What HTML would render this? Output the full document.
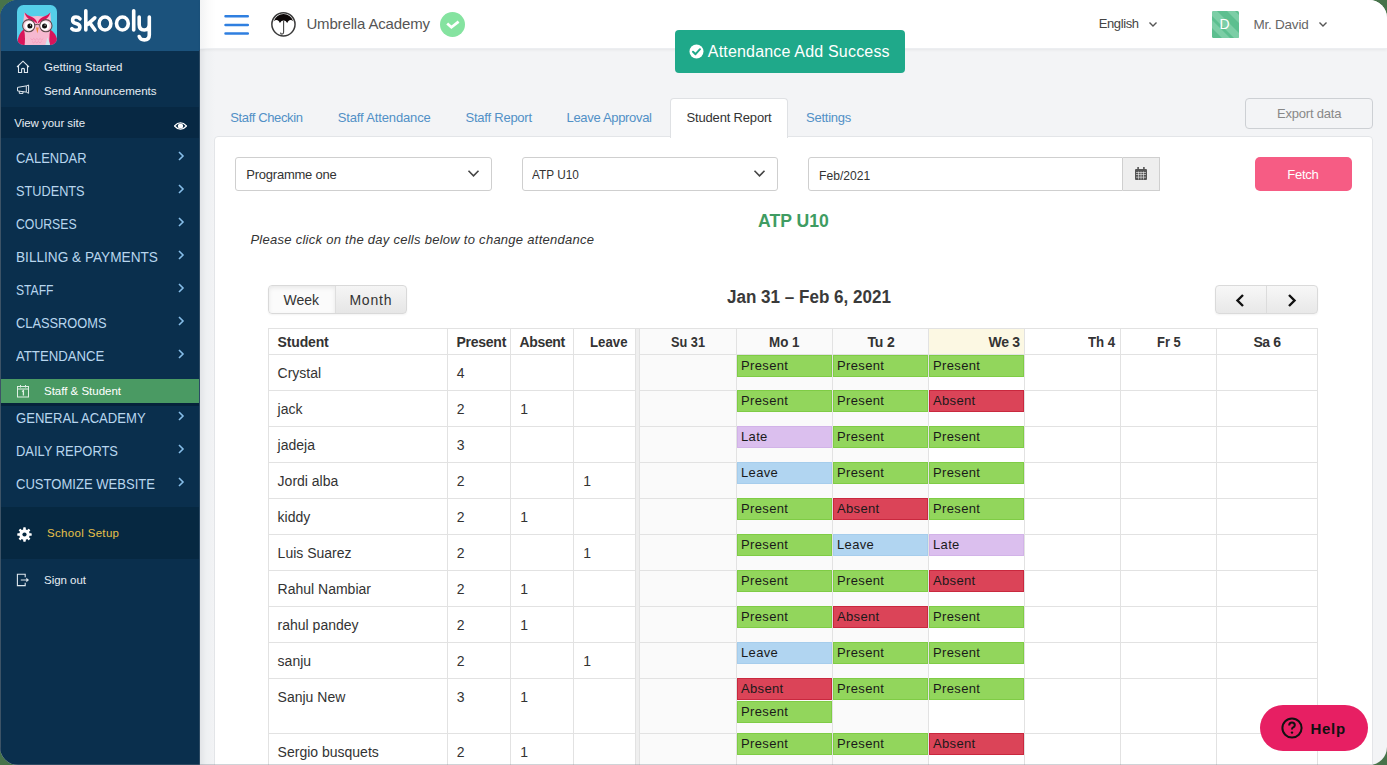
<!DOCTYPE html>
<html><head><meta charset="utf-8">
<style>
*{margin:0;padding:0;box-sizing:border-box;}
html,body{width:1387px;height:765px;overflow:hidden;background:#47734a;font-family:"Liberation Sans",sans-serif;}
#app{position:absolute;left:0;top:0;width:1387px;height:765px;border-radius:18px;overflow:hidden;background:#f3f4f6;}
.abs{position:absolute;}
.tx{position:absolute;white-space:nowrap;}
.hl{height:1px;background:#e2e2e2;}
.vl{width:1px;background:#e2e2e2;}
.badge{height:22px;font-size:13px;line-height:20px;padding-left:3px;color:#1a1a1a;border:1px solid;letter-spacing:0.35px;}
.bp{background:#92d65c;border-color:#7fcc45;}
.ba{background:#db4458;border-color:#c9283e;}
.bl{background:#b1d5f1;border-color:#a6cdec;}
.bt{background:#dbbfee;border-color:#d2b3e8;}
</style></head><body>
<div id="app">
<!-- sidebar -->
<div class="abs" style="left:0;top:0;width:200px;height:765px;background:#0a2f4d;"></div>
<div class="abs" style="left:0;top:0;width:200px;height:51px;background:#1b527c;"></div>
<div class="abs" style="left:0;top:107px;width:200px;height:31px;background:#072843;"></div>
<div class="abs" style="left:0;top:379px;width:199px;height:24px;background:#4a9a63;"></div>
<div class="abs" style="left:0;top:403px;width:199px;height:3px;background:#06233b;"></div>
<div class="abs" style="left:0;top:507px;width:200px;height:52px;background:#062841;"></div>
<div class="abs" style="left:0;top:0;width:1px;height:765px;background:#3d5366;"></div>
<div class="abs" style="left:199px;top:50px;width:1px;height:715px;background:#2c4a63;"></div>

<!-- owl logo -->
<svg class="abs" style="left:17px;top:5px" width="40" height="40" viewBox="0 0 40 40">
  <defs><clipPath id="oc"><rect x="0" y="0" width="40" height="40" rx="6.5"/></clipPath></defs>
  <g clip-path="url(#oc)">
  <rect x="0" y="0" width="40" height="40" fill="#55cfe9"/>
  <path d="M7.5 7.5 Q9.5 11 13 11.5 Q20 10.5 28 11.5 Q31.5 11 33.4 7.5 Q34 14 34 20 L34 40 L6 40 L6 20 Q6.5 14 7.5 7.5Z" fill="#f6b8d0"/>
  <path d="M7.5 7.5 Q9 12.8 13 14.8 Q17.5 16.6 20.3 18.5 Q19.6 14.3 15 12 Q10 10.4 7.5 7.5Z" fill="#d9145a"/>
  <path d="M33.4 7.5 Q31.9 12.8 27.9 14.8 Q23.4 16.6 20.6 18.5 Q21.3 14.3 25.9 12 Q30.9 10.4 33.4 7.5Z" fill="#d9145a"/>
  <path d="M0.3 40 Q-0.2 30 7 24 Q8.6 32 7.6 40Z" fill="#d9145a"/>
  <path d="M40.6 40 Q41.1 30 33.3 24.5 Q31.7 32 32.7 40Z" fill="#d9145a"/>
  <circle cx="11.7" cy="20.7" r="6.1" fill="#f9d2e0" stroke="#5d4a4c" stroke-width="1.1"/>
  <circle cx="28.9" cy="20.7" r="6.1" fill="#f9d2e0" stroke="#5d4a4c" stroke-width="1.1"/>
  <path d="M17.8 19.9 Q20.3 18.9 22.8 19.9" stroke="#5d4a4c" stroke-width="1" fill="none"/>
  <circle cx="12.5" cy="20.8" r="4.5" fill="#fff"/>
  <circle cx="28" cy="20.8" r="4.5" fill="#fff"/>
  <circle cx="12.9" cy="20.9" r="2.5" fill="#111"/>
  <circle cx="27.5" cy="20.9" r="2.5" fill="#111"/>
  <circle cx="13.5" cy="20.1" r="0.6" fill="#fff"/><circle cx="28.1" cy="20.1" r="0.6" fill="#fff"/>
  <path d="M19 22.5 L21.7 22.5 L20.35 28.6Z" fill="#f08a3c"/>
  <path d="M13.5 33.5 l1.6 1.4 l1.6-1.4 l1.6 1.4 l1.6-1.4 l1.6 1.4 l1.6-1.4 l1.6 1.4 l1.6-1.4 M15 36.5 l1.6 1.4 l1.6-1.4 l1.6 1.4 l1.6-1.4 l1.6 1.4 l1.6-1.4" stroke="#f199ba" stroke-width="0.8" fill="none"/>
  <path d="M28.3 40 L30.6 32.3 L33.2 40Z" fill="#cfe6ee"/>
  </g>
</svg>

<!-- skooly wordmark -->
<svg class="abs" style="left:0;top:0" width="200" height="50" viewBox="0 0 200 50" fill="none" stroke="#fff" stroke-width="3.6" stroke-linecap="round" stroke-linejoin="round">
  <path d="M80 18.8 Q78.5 17 76 17 Q72.6 17 72.6 20.2 Q72.6 22.6 76.2 23.6 Q79.9 24.6 79.9 27.2 Q79.9 30.3 76 30.3 Q73 30.3 71.8 28.6"/>
  <path d="M85.8 10.8 V30 M94.8 17.8 L87.6 24.3 M89.6 22.6 L95 30"/>
  <ellipse cx="105" cy="23.5" rx="5.9" ry="6.5"/>
  <ellipse cx="122.4" cy="23.5" rx="5.9" ry="6.5"/>
  <path d="M133.7 10.8 V30"/>
  <path d="M139.2 17 V24.5 Q139.2 30 144.2 30 Q149.3 30 149.3 24.5 M149.3 17 V35 Q149.3 39.9 144.2 39.9 Q140.4 39.9 139.2 36.5"/>
</svg>
<!-- sidebar icons -->
<svg class="abs" style="left:16px;top:60px" width="14" height="14" viewBox="0 0 14 14" fill="none" stroke="#dfe7ee" stroke-width="1.1">
  <path d="M1 7 L7 1.2 L13 7 M2.5 5.8 V12.5 H5.6 V9 Q7 7.6 8.4 9 V12.5 H11.5 V5.8"/>
</svg>
<svg class="abs" style="left:16px;top:84px" width="14" height="11" viewBox="0 0 14 11" fill="none" stroke="#dfe7ee" stroke-width="1">
  <path d="M1.5 3.4 L10.3 1.9 V8.1 L1.5 6.9Z M10.3 1.9 L12.6 1 V9.3 L10.3 8.1 M3.3 7.1 V9.4 H7 V7.6"/>
</svg>
<svg class="abs" style="left:174px;top:121px" width="13" height="10" viewBox="0 0 13 10">
  <path d="M0.5 5 Q6.5 -1.5 12.5 5 Q6.5 11.5 0.5 5Z" fill="none" stroke="#fff" stroke-width="1.2"/>
  <circle cx="6.5" cy="5" r="2.6" fill="#fff"/>
</svg>
<svg class="abs" style="left:16px;top:384px" width="14" height="14" viewBox="0 0 14 14" fill="none" stroke="#dff0e4" stroke-width="1">
  <rect x="1.5" y="2.5" width="11" height="10.5"/><path d="M1.5 5 H12.5 M4.5 1 V3.5 M9.5 1 V3.5"/>
  <path d="M6 7.5 L7.4 6.6 V11.5" stroke-width="1.3"/>
</svg>
<svg class="abs" style="left:17px;top:527px" width="15" height="15" viewBox="0 0 15 15">
  <g fill="#fff">
  <circle cx="7.5" cy="7.5" r="5.2"/>
  <rect x="6.2" y="0.3" width="2.6" height="14.4" rx="0.6"/>
  <rect x="6.2" y="0.3" width="2.6" height="14.4" rx="0.6" transform="rotate(45 7.5 7.5)"/>
  <rect x="6.2" y="0.3" width="2.6" height="14.4" rx="0.6" transform="rotate(90 7.5 7.5)"/>
  <rect x="6.2" y="0.3" width="2.6" height="14.4" rx="0.6" transform="rotate(135 7.5 7.5)"/>
  </g>
  <circle cx="7.5" cy="7.5" r="2.1" fill="#062841"/>
</svg>
<svg class="abs" style="left:16px;top:573px" width="14" height="14" viewBox="0 0 14 14">
  <path d="M9.2 4.2 V1.3 H1.4 V12.6 H9.2 V9.7 M4.8 7 H10.8" fill="none" stroke="#dfe7ee" stroke-width="1.1"/>
  <path d="M10.3 4.8 L13 7 L10.3 9.2Z" fill="#dfe7ee"/>
</svg>
<!-- sidebar chevrons -->
<svg class="abs" style="left:177px;top:150px" width="8" height="340" viewBox="0 0 8 340" fill="none" stroke="#86bde8" stroke-width="1.6">
  <path d="M2 2 L6 6 L2 10"/><path d="M2 35 L6 39 L2 43"/><path d="M2 68 L6 72 L2 76"/><path d="M2 101 L6 105 L2 109"/>
  <path d="M2 134 L6 138 L2 142"/><path d="M2 167 L6 171 L2 175"/><path d="M2 200 L6 204 L2 208"/>
  <path d="M2 262 L6 266 L2 270"/><path d="M2 295 L6 299 L2 303"/><path d="M2 328 L6 332 L2 336"/>
</svg>

<!-- content shadow from sidebar -->
<div class="abs" style="left:200px;top:0;width:15px;height:765px;background:linear-gradient(to right,#e2e4e7,#eef0f2 40%,#f3f4f6);"></div>

<!-- header -->
<div class="abs" style="left:200px;top:0;width:1187px;height:49px;background:linear-gradient(to right,#f2f3f4 0,#fbfbfb 8px,#fff 16px);box-shadow:0 1px 3px rgba(0,0,0,0.06);border-bottom:1px solid #eceef1;"></div>
<svg class="abs" style="left:223px;top:14px" width="27" height="22" viewBox="0 0 27 22" stroke="#2f7fe0" stroke-width="2.5" stroke-linecap="round">
  <path d="M2.5 2.25 H24.8 M2.5 10.9 H24.8 M2.5 19.55 H24.8"/>
</svg>
<svg class="abs" style="left:270px;top:11px" width="27" height="27" viewBox="0 0 27 27">
  <circle cx="13.45" cy="13.3" r="11.6" fill="#fff" stroke="#3a3a3a" stroke-width="1.5"/>
  <path d="M3.5 10.4 Q6.5 3.1 13.5 2.9 Q20.5 3.1 23.5 10.4 Q21.5 8.6 19.5 9.2 Q18 10 17.2 12 Q15.6 9.4 13.6 9.6 Q11.6 9.4 9.9 12 Q9.1 10 7.6 9.2 Q5.5 8.6 3.5 10.4Z" fill="#0d0808"/>
  <path d="M13.6 9.5 V21.2 Q13.6 23.1 11.9 23.1 Q10.6 23.1 10.5 21.6" fill="none" stroke="#444" stroke-width="1.1"/>
</svg>
<svg class="abs" style="left:440px;top:12px" width="25" height="25" viewBox="0 0 25 25">
  <circle cx="12.5" cy="12.5" r="12.5" fill="#85e3a0"/>
  <path d="M7.2 11.4 L11.4 15.3 L18.6 9.6" fill="none" stroke="#fff" stroke-width="2.7"/>
</svg>
<svg class="abs" style="left:1148px;top:21px" width="10" height="7" viewBox="0 0 10 7" fill="none" stroke="#555" stroke-width="1.4"><path d="M1.5 1.5 L5 5 L8.5 1.5"/></svg>
<svg class="abs" style="left:1212px;top:11px" width="27" height="27" viewBox="0 0 27 27">
  <defs><clipPath id="av"><rect width="27" height="27" rx="1.5"/></clipPath></defs>
  <g clip-path="url(#av)">
  <rect width="27" height="27" fill="#5cbf8f"/>
  <path d="M-5 0 L0 -5 L32 27 L27 32Z M-5 12 L-1 8 L26 35 L22 39Z M5 -10 L9 -14 L40 17 L36 21Z" fill="#7fcfa9" opacity="0.9"/>
  </g>
</svg>
<svg class="abs" style="left:1318px;top:21px" width="10" height="7" viewBox="0 0 10 7" fill="none" stroke="#555" stroke-width="1.4"><path d="M1.5 1.5 L5 5 L8.5 1.5"/></svg>

<!-- tabs -->
<div class="abs" style="left:214px;top:136px;width:1159px;height:640px;background:#fff;border:1px solid #e3e5e8;border-radius:4px;"></div>
<div class="abs" style="left:670px;top:98px;width:118px;height:40px;background:#fff;border:1px solid #dfe1e4;border-bottom:none;border-radius:4px 4px 0 0;"></div>
<div class="abs" style="left:1245px;top:98px;width:128px;height:31px;border:1px solid #cdd0d4;border-radius:4px;"></div>

<!-- form controls -->
<div class="abs" style="left:235px;top:157px;width:257px;height:34px;border:1px solid #cfcfcf;border-radius:3px;background:#fff;"></div>
<svg class="abs" style="left:467px;top:169px" width="13" height="9" viewBox="0 0 13 9" fill="none" stroke="#444" stroke-width="1.6"><path d="M1.5 1.8 L6.5 6.8 L11.5 1.8"/></svg>
<div class="abs" style="left:522px;top:157px;width:256px;height:34px;border:1px solid #cfcfcf;border-radius:3px;background:#fff;"></div>
<svg class="abs" style="left:753px;top:169px" width="13" height="9" viewBox="0 0 13 9" fill="none" stroke="#444" stroke-width="1.6"><path d="M1.5 1.8 L6.5 6.8 L11.5 1.8"/></svg>
<div class="abs" style="left:808px;top:157px;width:315px;height:34px;border:1px solid #cfcfcf;border-radius:3px 0 0 3px;background:#fff;"></div>
<div class="abs" style="left:1123px;top:157px;width:37px;height:34px;border:1px solid #cfcfcf;border-left:none;background:#eeeeee;"></div>
<svg class="abs" style="left:1135px;top:167px" width="12" height="13" viewBox="0 0 12 13">
  <rect x="0" y="2" width="12" height="11" rx="1" fill="#555"/>
  <rect x="2.3" y="0" width="1.6" height="3" fill="#555"/><rect x="8.1" y="0" width="1.6" height="3" fill="#555"/>
  <g fill="#eee"><rect x="1" y="5" width="10" height="0.6"/><rect x="1" y="7.4" width="10" height="0.6"/><rect x="1" y="9.8" width="10" height="0.6"/>
  <rect x="3.2" y="4.5" width="0.6" height="8"/><rect x="5.7" y="4.5" width="0.6" height="8"/><rect x="8.2" y="4.5" width="0.6" height="8"/></g>
</svg>
<div class="abs" style="left:1255px;top:157px;width:97px;height:34px;background:#f65c84;border-radius:5px;"></div>

<!-- calendar toolbar -->
<div class="abs" style="left:268px;top:285px;width:139px;height:29px;border-radius:4px;background:linear-gradient(#f5f5f5,#e6e6e6);border:1px solid #d9d9d9;box-shadow:0 1px 2px rgba(0,0,0,0.05);"></div>
<div class="abs" style="left:269px;top:286px;width:66px;height:27px;background:#fbfbfb;border-radius:3px 0 0 3px;box-shadow:inset 0 2px 4px rgba(0,0,0,0.08);"></div>
<div class="abs" style="left:335px;top:286px;width:1px;height:27px;background:#dedede;"></div>
<div class="abs" style="left:1215px;top:285px;width:103px;height:29px;border-radius:4px;background:linear-gradient(#f7f7f7,#e8e8e8);border:1px solid #dadada;box-shadow:0 1px 2px rgba(0,0,0,0.05);"></div>
<div class="abs" style="left:1266px;top:286px;width:1px;height:27px;background:#dcdcdc;"></div>
<svg class="abs" style="left:1234px;top:293px" width="12" height="15" viewBox="0 0 12 15" fill="none" stroke="#111" stroke-width="2.4"><path d="M9 2 L3.5 7.5 L9 13"/></svg>
<svg class="abs" style="left:1286px;top:293px" width="12" height="15" viewBox="0 0 12 15" fill="none" stroke="#111" stroke-width="2.4"><path d="M3 2 L8.5 7.5 L3 13"/></svg>

<!-- table -->
<div class="abs" style="left:268px;top:328px;width:1049px;height:437px;background:#fff;"></div>
<div class="abs" style="left:640px;top:328px;width:288px;height:437px;background:#fafafa;"></div>
<div class="abs" style="left:928px;top:328px;width:96px;height:26px;background:#fcf8e3;"></div>
<div class="abs hl" style="left:268px;top:328px;width:1049px;"></div>
<div class="abs hl" style="left:268px;top:354px;width:1049px;"></div>
<div class="abs hl" style="left:268px;top:390px;width:1049px;"></div>
<div class="abs hl" style="left:268px;top:426px;width:1049px;"></div>
<div class="abs hl" style="left:268px;top:462px;width:1049px;"></div>
<div class="abs hl" style="left:268px;top:498px;width:1049px;"></div>
<div class="abs hl" style="left:268px;top:534px;width:1049px;"></div>
<div class="abs hl" style="left:268px;top:570px;width:1049px;"></div>
<div class="abs hl" style="left:268px;top:606px;width:1049px;"></div>
<div class="abs hl" style="left:268px;top:642px;width:1049px;"></div>
<div class="abs hl" style="left:268px;top:678px;width:1049px;"></div>
<div class="abs hl" style="left:268px;top:733px;width:1049px;"></div>
<div class="abs" style="left:635px;top:329px;width:5px;height:437px;background:#efefef;"></div>
<div class="abs vl" style="left:268px;top:328px;height:437px;"></div>
<div class="abs vl" style="left:447px;top:328px;height:437px;"></div>
<div class="abs vl" style="left:510px;top:328px;height:437px;"></div>
<div class="abs vl" style="left:573px;top:328px;height:437px;"></div>
<div class="abs vl" style="left:635px;top:328px;height:437px;"></div>
<div class="abs vl" style="left:639px;top:328px;height:437px;"></div>
<div class="abs vl" style="left:736px;top:328px;height:437px;"></div>
<div class="abs vl" style="left:832px;top:328px;height:437px;"></div>
<div class="abs vl" style="left:928px;top:328px;height:437px;"></div>
<div class="abs vl" style="left:1024px;top:328px;height:437px;"></div>
<div class="abs vl" style="left:1120px;top:328px;height:437px;"></div>
<div class="abs vl" style="left:1216px;top:328px;height:437px;"></div>
<div class="abs vl" style="left:1317px;top:328px;height:437px;"></div>
<div class="abs badge bp" style="left:737px;top:355px;width:95px;">Present</div>
<div class="abs badge bp" style="left:833px;top:355px;width:95px;">Present</div>
<div class="abs badge bp" style="left:929px;top:355px;width:95px;">Present</div>
<div class="abs badge bp" style="left:737px;top:390px;width:95px;">Present</div>
<div class="abs badge bp" style="left:833px;top:390px;width:95px;">Present</div>
<div class="abs badge ba" style="left:929px;top:390px;width:95px;">Absent</div>
<div class="abs badge bt" style="left:737px;top:426px;width:95px;">Late</div>
<div class="abs badge bp" style="left:833px;top:426px;width:95px;">Present</div>
<div class="abs badge bp" style="left:929px;top:426px;width:95px;">Present</div>
<div class="abs badge bl" style="left:737px;top:462px;width:95px;">Leave</div>
<div class="abs badge bp" style="left:833px;top:462px;width:95px;">Present</div>
<div class="abs badge bp" style="left:929px;top:462px;width:95px;">Present</div>
<div class="abs badge bp" style="left:737px;top:498px;width:95px;">Present</div>
<div class="abs badge ba" style="left:833px;top:498px;width:95px;">Absent</div>
<div class="abs badge bp" style="left:929px;top:498px;width:95px;">Present</div>
<div class="abs badge bp" style="left:737px;top:534px;width:95px;">Present</div>
<div class="abs badge bl" style="left:833px;top:534px;width:95px;">Leave</div>
<div class="abs badge bt" style="left:929px;top:534px;width:95px;">Late</div>
<div class="abs badge bp" style="left:737px;top:570px;width:95px;">Present</div>
<div class="abs badge bp" style="left:833px;top:570px;width:95px;">Present</div>
<div class="abs badge ba" style="left:929px;top:570px;width:95px;">Absent</div>
<div class="abs badge bp" style="left:737px;top:606px;width:95px;">Present</div>
<div class="abs badge ba" style="left:833px;top:606px;width:95px;">Absent</div>
<div class="abs badge bp" style="left:929px;top:606px;width:95px;">Present</div>
<div class="abs badge bl" style="left:737px;top:642px;width:95px;">Leave</div>
<div class="abs badge bp" style="left:833px;top:642px;width:95px;">Present</div>
<div class="abs badge bp" style="left:929px;top:642px;width:95px;">Present</div>
<div class="abs badge ba" style="left:737px;top:678px;width:95px;">Absent</div>
<div class="abs badge bp" style="left:833px;top:678px;width:95px;">Present</div>
<div class="abs badge bp" style="left:929px;top:678px;width:95px;">Present</div>
<div class="abs badge bp" style="left:737px;top:701px;width:95px;">Present</div>
<div class="abs badge bp" style="left:737px;top:733px;width:95px;">Present</div>
<div class="abs badge bp" style="left:833px;top:733px;width:95px;">Present</div>
<div class="abs badge ba" style="left:929px;top:733px;width:95px;">Absent</div>

<!-- toast -->
<div class="abs" style="left:675px;top:30px;width:230px;height:43px;background:#1fa98a;border-radius:4px;"></div>
<svg class="abs" style="left:689px;top:43.8px" width="15" height="15" viewBox="0 0 15 15">
  <circle cx="7.5" cy="7.5" r="7" fill="#fff"/>
  <path d="M4 7.8 L6.5 10.2 L11 5.2" fill="none" stroke="#1fa98a" stroke-width="2" stroke-linecap="round" stroke-linejoin="round"/>
</svg>

<!-- help -->
<div class="abs" style="left:1260px;top:705px;width:108px;height:46px;background:#e71f63;border-radius:23px;"></div>
<svg class="abs" style="left:1281px;top:717px" width="22" height="22" viewBox="0 0 22 22">
  <circle cx="11" cy="11" r="9.6" fill="none" stroke="#111" stroke-width="2"/>
  <path d="M8.2 8.6 Q8.2 5.6 11 5.6 Q13.8 5.6 13.8 8.2 Q13.8 9.8 11.8 10.7 Q11 11.1 11 12.6" fill="none" stroke="#111" stroke-width="2"/>
  <circle cx="11" cy="15.6" r="1.2" fill="#111"/>
</svg>

<span id="t1" class="tx" style="left:43.90px;top:62.27px;font-size:11.5px;line-height:11.5px;color:#e6edf3;font-weight:normal;font-style:normal;letter-spacing:0.074px;">Getting Started</span>
<span id="t2" class="tx" style="left:43.90px;top:86.07px;font-size:11.5px;line-height:11.5px;color:#e6edf3;font-weight:normal;font-style:normal;letter-spacing:0.004px;">Send Announcements</span>
<span id="t3" class="tx" style="left:14.30px;top:118.07px;font-size:11.5px;line-height:11.5px;color:#e6edf3;font-weight:normal;font-style:normal;letter-spacing:-0.045px;">View your site</span>
<span id="t4" class="tx" style="left:16.30px;top:151.23px;font-size:14.5px;line-height:14.5px;color:#b8d6ee;font-weight:normal;font-style:normal;letter-spacing:0.000px;transform:scaleX(0.8927);transform-origin:0 0;">CALENDAR</span>
<span id="t5" class="tx" style="left:16.30px;top:184.13px;font-size:14.5px;line-height:14.5px;color:#b8d6ee;font-weight:normal;font-style:normal;letter-spacing:0.000px;transform:scaleX(0.8777);transform-origin:0 0;">STUDENTS</span>
<span id="t6" class="tx" style="left:16.30px;top:217.13px;font-size:14.5px;line-height:14.5px;color:#b8d6ee;font-weight:normal;font-style:normal;letter-spacing:0.000px;transform:scaleX(0.8449);transform-origin:0 0;">COURSES</span>
<span id="t7" class="tx" style="left:16.30px;top:250.03px;font-size:14.5px;line-height:14.5px;color:#b8d6ee;font-weight:normal;font-style:normal;letter-spacing:0.000px;transform:scaleX(0.9400);transform-origin:0 0;">BILLING &amp; PAYMENTS</span>
<span id="t8" class="tx" style="left:16.30px;top:282.93px;font-size:14.5px;line-height:14.5px;color:#b8d6ee;font-weight:normal;font-style:normal;letter-spacing:0.000px;transform:scaleX(0.8361);transform-origin:0 0;">STAFF</span>
<span id="t9" class="tx" style="left:16.30px;top:315.93px;font-size:14.5px;line-height:14.5px;color:#b8d6ee;font-weight:normal;font-style:normal;letter-spacing:0.000px;transform:scaleX(0.8844);transform-origin:0 0;">CLASSROOMS</span>
<span id="t10" class="tx" style="left:16.30px;top:348.73px;font-size:14.5px;line-height:14.5px;color:#b8d6ee;font-weight:normal;font-style:normal;letter-spacing:0.000px;transform:scaleX(0.9082);transform-origin:0 0;">ATTENDANCE</span>
<span id="t11" class="tx" style="left:16.30px;top:410.63px;font-size:14.5px;line-height:14.5px;color:#b8d6ee;font-weight:normal;font-style:normal;letter-spacing:0.000px;transform:scaleX(0.9019);transform-origin:0 0;">GENERAL ACADEMY</span>
<span id="t12" class="tx" style="left:16.30px;top:443.73px;font-size:14.5px;line-height:14.5px;color:#b8d6ee;font-weight:normal;font-style:normal;letter-spacing:0.000px;transform:scaleX(0.8913);transform-origin:0 0;">DAILY REPORTS</span>
<span id="t13" class="tx" style="left:16.30px;top:476.63px;font-size:14.5px;line-height:14.5px;color:#b8d6ee;font-weight:normal;font-style:normal;letter-spacing:0.000px;transform:scaleX(0.9001);transform-origin:0 0;">CUSTOMIZE WEBSITE</span>
<span id="t14" class="tx" style="left:44.00px;top:385.57px;font-size:11.5px;line-height:11.5px;color:#fff;font-weight:normal;font-style:normal;letter-spacing:-0.011px;">Staff &amp; Student</span>
<span id="t15" class="tx" style="left:47.00px;top:527.87px;font-size:11.5px;line-height:11.5px;color:#e8c14a;font-weight:normal;font-style:normal;letter-spacing:0.326px;">School Setup</span>
<span id="t16" class="tx" style="left:44.00px;top:575.07px;font-size:11.5px;line-height:11.5px;color:#e6edf3;font-weight:normal;font-style:normal;letter-spacing:-0.029px;">Sign out</span>
<span id="t17" class="tx" style="left:306.40px;top:15.80px;font-size:15px;line-height:15px;color:#555;font-weight:normal;font-style:normal;letter-spacing:-0.152px;">Umbrella Academy</span>
<span id="t18" class="tx" style="left:1098.70px;top:17.10px;font-size:13px;line-height:13px;color:#444;font-weight:normal;font-style:normal;letter-spacing:-0.392px;">English</span>
<span id="t19" class="tx" style="left:1253.40px;top:17.87px;font-size:13.5px;line-height:13.5px;color:#666;font-weight:normal;font-style:normal;letter-spacing:-0.215px;">Mr. David</span>
<span id="t20" class="tx" style="left:707.80px;top:43.76px;font-size:16px;line-height:16px;color:#fff;font-weight:normal;font-style:normal;letter-spacing:0.186px;">Attendance Add Success</span>
<span id="t21" class="tx" style="left:230.30px;top:111.00px;font-size:13px;line-height:13px;color:#5190c6;font-weight:normal;font-style:normal;letter-spacing:-0.366px;">Staff Checkin</span>
<span id="t22" class="tx" style="left:337.80px;top:111.00px;font-size:13px;line-height:13px;color:#5190c6;font-weight:normal;font-style:normal;letter-spacing:-0.145px;">Staff Attendance</span>
<span id="t23" class="tx" style="left:465.50px;top:111.00px;font-size:13px;line-height:13px;color:#5190c6;font-weight:normal;font-style:normal;letter-spacing:-0.232px;">Staff Report</span>
<span id="t24" class="tx" style="left:566.50px;top:111.00px;font-size:13px;line-height:13px;color:#5190c6;font-weight:normal;font-style:normal;letter-spacing:-0.317px;">Leave Approval</span>
<span id="t25" class="tx" style="left:686.60px;top:111.00px;font-size:13px;line-height:13px;color:#333;font-weight:normal;font-style:normal;letter-spacing:-0.181px;">Student Report</span>
<span id="t26" class="tx" style="left:806.00px;top:111.00px;font-size:13px;line-height:13px;color:#5190c6;font-weight:normal;font-style:normal;letter-spacing:-0.239px;">Settings</span>
<span id="t27" class="tx" style="left:1277.00px;top:107.10px;font-size:13px;line-height:13px;color:#888;font-weight:normal;font-style:normal;letter-spacing:-0.200px;">Export data</span>
<span id="t28" class="tx" style="left:246.20px;top:168.00px;font-size:13px;line-height:13px;color:#333;font-weight:normal;font-style:normal;letter-spacing:-0.219px;">Programme one</span>
<span id="t29" class="tx" style="left:532.00px;top:168.00px;font-size:13px;line-height:13px;color:#333;font-weight:normal;font-style:normal;letter-spacing:0.000px;transform:scaleX(0.9078);transform-origin:0 0;">ATP U10</span>
<span id="t30" class="tx" style="left:819.40px;top:168.50px;font-size:13px;line-height:13px;color:#333;font-weight:normal;font-style:normal;letter-spacing:0.000px;transform:scaleX(0.9319);transform-origin:0 0;">Feb/2021</span>
<span id="t31" class="tx" style="left:1287.30px;top:168.00px;font-size:13px;line-height:13px;color:#fff;font-weight:normal;font-style:normal;letter-spacing:-0.279px;">Fetch</span>
<span id="t32" class="tx" style="left:757.80px;top:211.94px;font-size:18.5px;line-height:18.5px;color:#3f9c62;font-weight:bold;font-style:normal;letter-spacing:0.000px;transform:scaleX(0.9519);transform-origin:0 0;">ATP U10</span>
<span id="t33" class="tx" style="left:250.40px;top:233.00px;font-size:13px;line-height:13px;color:#333;font-weight:normal;font-style:italic;letter-spacing:0.269px;">Please click on the day cells below to change attendance</span>
<span id="t34" class="tx" style="left:727.20px;top:287.76px;font-size:18px;line-height:18px;color:#3a3a3a;font-weight:bold;font-style:normal;letter-spacing:0.000px;transform:scaleX(0.9474);transform-origin:0 0;">Jan 31 – Feb 6, 2021</span>
<span id="t35" class="tx" style="left:283.60px;top:292.75px;font-size:14px;line-height:14px;color:#333;font-weight:normal;font-style:normal;letter-spacing:-0.047px;">Week</span>
<span id="t36" class="tx" style="left:349.40px;top:292.75px;font-size:14px;line-height:14px;color:#333;font-weight:normal;font-style:normal;letter-spacing:0.795px;">Month</span>
<span id="t37" class="tx" style="left:277.60px;top:335.05px;font-size:14px;line-height:14px;color:#333;font-weight:bold;font-style:normal;letter-spacing:-0.152px;">Student</span>
<span id="t38" class="tx" style="left:456.50px;top:335.05px;font-size:14px;line-height:14px;color:#333;font-weight:bold;font-style:normal;letter-spacing:-0.261px;">Present</span>
<span id="t39" class="tx" style="left:519.50px;top:335.05px;font-size:14px;line-height:14px;color:#333;font-weight:bold;font-style:normal;letter-spacing:-0.351px;">Absent</span>
<span id="t40" class="tx" style="left:589.50px;top:335.05px;font-size:14px;line-height:14px;color:#333;font-weight:bold;font-style:normal;letter-spacing:0.000px;transform:scaleX(0.9444);transform-origin:0 0;">Leave</span>
<span id="t41" class="tx" style="left:670.60px;top:335.05px;font-size:14px;line-height:14px;color:#333;font-weight:bold;font-style:normal;letter-spacing:0.000px;transform:scaleX(0.9102);transform-origin:0 0;">Su 31</span>
<span id="t42" class="tx" style="left:769.00px;top:335.05px;font-size:14px;line-height:14px;color:#333;font-weight:bold;font-style:normal;letter-spacing:0.000px;transform:scaleX(0.9560);transform-origin:0 0;">Mo 1</span>
<span id="t43" class="tx" style="left:867.40px;top:335.05px;font-size:14px;line-height:14px;color:#333;font-weight:bold;font-style:normal;letter-spacing:-0.114px;">Tu 2</span>
<span id="t44" class="tx" style="left:988.50px;top:335.05px;font-size:14px;line-height:14px;color:#333;font-weight:bold;font-style:normal;letter-spacing:-0.312px;">We 3</span>
<span id="t45" class="tx" style="left:1088.40px;top:335.05px;font-size:14px;line-height:14px;color:#333;font-weight:bold;font-style:normal;letter-spacing:0.000px;transform:scaleX(0.9451);transform-origin:0 0;">Th 4</span>
<span id="t46" class="tx" style="left:1156.90px;top:335.05px;font-size:14px;line-height:14px;color:#333;font-weight:bold;font-style:normal;letter-spacing:0.000px;transform:scaleX(0.9228);transform-origin:0 0;">Fr 5</span>
<span id="t47" class="tx" style="left:1253.40px;top:335.05px;font-size:14px;line-height:14px;color:#333;font-weight:bold;font-style:normal;letter-spacing:-0.404px;">Sa 6</span>
<span id="t48" class="tx" style="left:277.60px;top:365.65px;font-size:14px;line-height:14px;color:#333;font-weight:normal;font-style:normal;letter-spacing:0.000px;">Crystal</span>
<span id="t49" class="tx" style="left:456.70px;top:365.65px;font-size:14px;line-height:14px;color:#333;font-weight:normal;font-style:normal;letter-spacing:0.000px;">4</span>
<span id="t50" class="tx" style="left:277.60px;top:401.65px;font-size:14px;line-height:14px;color:#333;font-weight:normal;font-style:normal;letter-spacing:0.000px;">jack</span>
<span id="t51" class="tx" style="left:456.70px;top:401.65px;font-size:14px;line-height:14px;color:#333;font-weight:normal;font-style:normal;letter-spacing:0.000px;">2</span>
<span id="t52" class="tx" style="left:520.30px;top:401.65px;font-size:14px;line-height:14px;color:#333;font-weight:normal;font-style:normal;letter-spacing:0.000px;">1</span>
<span id="t53" class="tx" style="left:277.60px;top:437.65px;font-size:14px;line-height:14px;color:#333;font-weight:normal;font-style:normal;letter-spacing:0.000px;">jadeja</span>
<span id="t54" class="tx" style="left:456.70px;top:437.65px;font-size:14px;line-height:14px;color:#333;font-weight:normal;font-style:normal;letter-spacing:0.000px;">3</span>
<span id="t55" class="tx" style="left:277.60px;top:473.65px;font-size:14px;line-height:14px;color:#333;font-weight:normal;font-style:normal;letter-spacing:0.000px;">Jordi alba</span>
<span id="t56" class="tx" style="left:456.70px;top:473.65px;font-size:14px;line-height:14px;color:#333;font-weight:normal;font-style:normal;letter-spacing:0.000px;">2</span>
<span id="t57" class="tx" style="left:583.20px;top:473.65px;font-size:14px;line-height:14px;color:#333;font-weight:normal;font-style:normal;letter-spacing:0.000px;">1</span>
<span id="t58" class="tx" style="left:277.60px;top:509.65px;font-size:14px;line-height:14px;color:#333;font-weight:normal;font-style:normal;letter-spacing:0.000px;">kiddy</span>
<span id="t59" class="tx" style="left:456.70px;top:509.65px;font-size:14px;line-height:14px;color:#333;font-weight:normal;font-style:normal;letter-spacing:0.000px;">2</span>
<span id="t60" class="tx" style="left:520.30px;top:509.65px;font-size:14px;line-height:14px;color:#333;font-weight:normal;font-style:normal;letter-spacing:0.000px;">1</span>
<span id="t61" class="tx" style="left:277.60px;top:545.65px;font-size:14px;line-height:14px;color:#333;font-weight:normal;font-style:normal;letter-spacing:0.000px;">Luis Suarez</span>
<span id="t62" class="tx" style="left:456.70px;top:545.65px;font-size:14px;line-height:14px;color:#333;font-weight:normal;font-style:normal;letter-spacing:0.000px;">2</span>
<span id="t63" class="tx" style="left:583.20px;top:545.65px;font-size:14px;line-height:14px;color:#333;font-weight:normal;font-style:normal;letter-spacing:0.000px;">1</span>
<span id="t64" class="tx" style="left:277.60px;top:581.65px;font-size:14px;line-height:14px;color:#333;font-weight:normal;font-style:normal;letter-spacing:0.000px;">Rahul Nambiar</span>
<span id="t65" class="tx" style="left:456.70px;top:581.65px;font-size:14px;line-height:14px;color:#333;font-weight:normal;font-style:normal;letter-spacing:0.000px;">2</span>
<span id="t66" class="tx" style="left:520.30px;top:581.65px;font-size:14px;line-height:14px;color:#333;font-weight:normal;font-style:normal;letter-spacing:0.000px;">1</span>
<span id="t67" class="tx" style="left:277.60px;top:617.65px;font-size:14px;line-height:14px;color:#333;font-weight:normal;font-style:normal;letter-spacing:0.000px;">rahul pandey</span>
<span id="t68" class="tx" style="left:456.70px;top:617.65px;font-size:14px;line-height:14px;color:#333;font-weight:normal;font-style:normal;letter-spacing:0.000px;">2</span>
<span id="t69" class="tx" style="left:520.30px;top:617.65px;font-size:14px;line-height:14px;color:#333;font-weight:normal;font-style:normal;letter-spacing:0.000px;">1</span>
<span id="t70" class="tx" style="left:277.60px;top:653.65px;font-size:14px;line-height:14px;color:#333;font-weight:normal;font-style:normal;letter-spacing:0.000px;">sanju</span>
<span id="t71" class="tx" style="left:456.70px;top:653.65px;font-size:14px;line-height:14px;color:#333;font-weight:normal;font-style:normal;letter-spacing:0.000px;">2</span>
<span id="t72" class="tx" style="left:583.20px;top:653.65px;font-size:14px;line-height:14px;color:#333;font-weight:normal;font-style:normal;letter-spacing:0.000px;">1</span>
<span id="t73" class="tx" style="left:277.60px;top:690.35px;font-size:14px;line-height:14px;color:#333;font-weight:normal;font-style:normal;letter-spacing:0.000px;">Sanju New</span>
<span id="t74" class="tx" style="left:456.70px;top:690.35px;font-size:14px;line-height:14px;color:#333;font-weight:normal;font-style:normal;letter-spacing:0.000px;">3</span>
<span id="t75" class="tx" style="left:520.30px;top:690.35px;font-size:14px;line-height:14px;color:#333;font-weight:normal;font-style:normal;letter-spacing:0.000px;">1</span>
<span id="t76" class="tx" style="left:277.60px;top:745.35px;font-size:14px;line-height:14px;color:#333;font-weight:normal;font-style:normal;letter-spacing:0.000px;">Sergio busquets</span>
<span id="t77" class="tx" style="left:456.70px;top:745.35px;font-size:14px;line-height:14px;color:#333;font-weight:normal;font-style:normal;letter-spacing:0.000px;">2</span>
<span id="t78" class="tx" style="left:520.30px;top:745.35px;font-size:14px;line-height:14px;color:#333;font-weight:normal;font-style:normal;letter-spacing:0.000px;">1</span>
<span id="t79" class="tx" style="left:1310.40px;top:721.30px;font-size:15px;line-height:15px;color:#111;font-weight:bold;font-style:normal;letter-spacing:0.764px;">Help</span>
<span id="t80" class="tx" style="left:1219.50px;top:17.45px;font-size:14px;line-height:14px;color:#fff;font-weight:normal;font-style:normal;letter-spacing:0.000px;">D</span>
<div class="abs" style="left:0;top:764px;width:1387px;height:1px;background:rgba(120,130,140,0.35);"></div>
</div>
</body></html>
